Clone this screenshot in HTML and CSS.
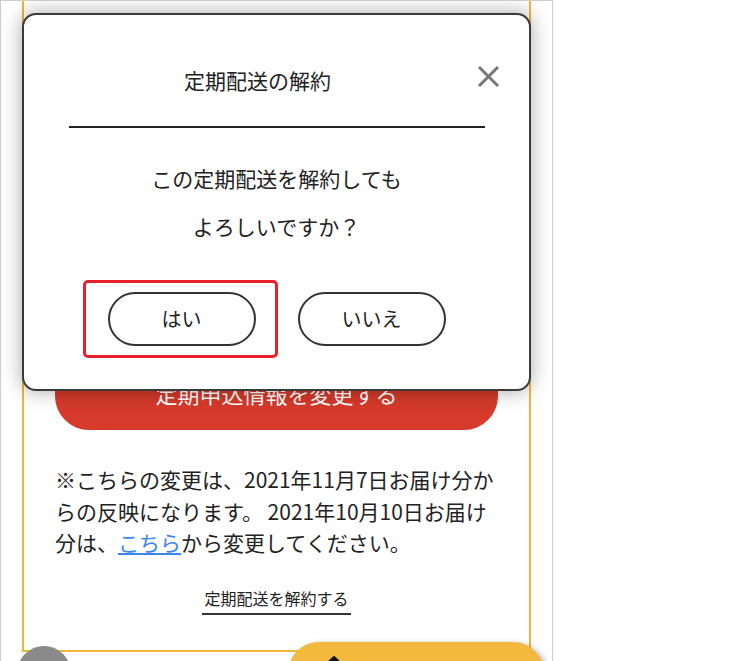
FILE: index.html
```html
<!DOCTYPE html>
<html lang="ja">
<head>
<title>定期配送の解約</title>
<meta charset="utf-8">
<link rel="stylesheet" href="styles.css">
</head>
<body>
<div class="phone">
    <div class="card">
        <a class="btn-change" href="#">定期申込情報を変更する</a>
        <p class="note">※こちらの変更は、2021年11月7日お届け分からの反映になります。 2021年10月10日お届け分は、<a href="#">こちら</a>から変更してください。</p>
        <div class="cancel-wrap"><a class="cancel-link" href="#">定期配送を解約する</a></div>
    </div>

    <div class="to-top"></div>
    <div class="cart">
        <svg class="cart-icon" width="30" height="30" viewBox="0 0 30 30">
            <path d="M15 2 L3 13 H7 V28 H23 V13 H27 Z" fill="#111" stroke="#111" stroke-width="2" stroke-linejoin="round"/>
        </svg>
    </div>

    <!-- 解約確認モーダル -->
    <div class="modal">
        <a class="modal-close" href="#">
            <svg width="23" height="23" viewBox="0 0 23 23">
                <path d="M2 2 L21 21 M21 2 L2 21" stroke="#777" stroke-width="3" stroke-linecap="butt"/>
            </svg>
        </a>
        <h2 class="modal-title">定期配送の解約</h2>
        <div class="modal-line"></div>
        <p class="modal-msg">この定期配送を解約しても<br>よろしいですか？</p>
        <div class="modal-btns">
            <a class="btn btn-yes" href="#">はい</a>
            <a class="btn" href="#">いいえ</a>
        </div>
    </div>
</div>
</body>
</html>
```

FILE: styles.css
```css
body,p,h2{margin: 0;padding: 0;}
body{background: #fff;font-family: "Noto Sans CJK JP", "Noto Sans", sans-serif;color: #222;}
a{text-decoration: none;color: inherit;}

.phone{width: 551px;height: 660px;border: 1px solid #ccc;border-bottom: none;position: relative;overflow: hidden;background: #fff;}

.card{width: 509px;box-sizing: border-box;margin: -20px 0 0 21px;padding: 373px 31px 35px;border: 2px solid #f2b53b;}
.btn-change{display: block;height: 74px;line-height: 74px;border-radius: 34px;background: #d53a2a;color: #fff;text-align: center;font-size: 22px;}
.note{margin-top: 34px;font-size: 21px;line-height: 31.5px;}
.note a{color: #3a86f0;text-decoration: underline;}
.cancel-wrap{margin-top: 27px;text-align: center;}
.cancel-link{display: inline-block;font-size: 16px;line-height: 24px;padding: 0 2px 3px;border-bottom: 2px solid #333;}

.to-top{position: absolute;left: 16px;top: 645px;width: 54px;height: 54px;border-radius: 50%;background: #8a8a8a;}
.cart{position: absolute;left: 287px;top: 641px;width: 256px;height: 62px;border-radius: 31px;background: #f3b93e;box-shadow: 3px 2px 6px rgba(0,0,0,.3);}
.cart-icon{position: absolute;left: 31px;top: 13px;}

.modal{position: absolute;left: 21px;top: 12px;width: 509px;box-sizing: border-box;padding: 50px 0 43px;border: 2px solid #3a3a3a;border-radius: 14px;background: #fff;box-shadow: 0 0 20px rgba(0,0,0,.35);text-align: center;}
.modal-close{position: absolute;right: 29px;top: 50px;width: 23px;height: 23px;}
.modal-close svg{display: block;}
.modal-title{padding-right: 38px;font-size: 21px;font-weight: normal;line-height: 30px;}
.modal-line{width: 416px;height: 2px;margin: 31px auto 0;background: #222;}
.modal-msg{margin-top: 26px;font-size: 21px;line-height: 48px;}
.modal-btns{display: flex;justify-content: center;gap: 42px;margin-top: 42px;}
.btn{display: block;width: 148px;height: 54px;box-sizing: border-box;border: 2px solid #333;border-radius: 27px;font-size: 20px;line-height: 50px;position: relative;}
.btn-yes::after{content: "";position: absolute;left: -27px;right: -24px;top: -14px;bottom: -14px;border: 3px solid #e8202c;border-radius: 5px;}
```
